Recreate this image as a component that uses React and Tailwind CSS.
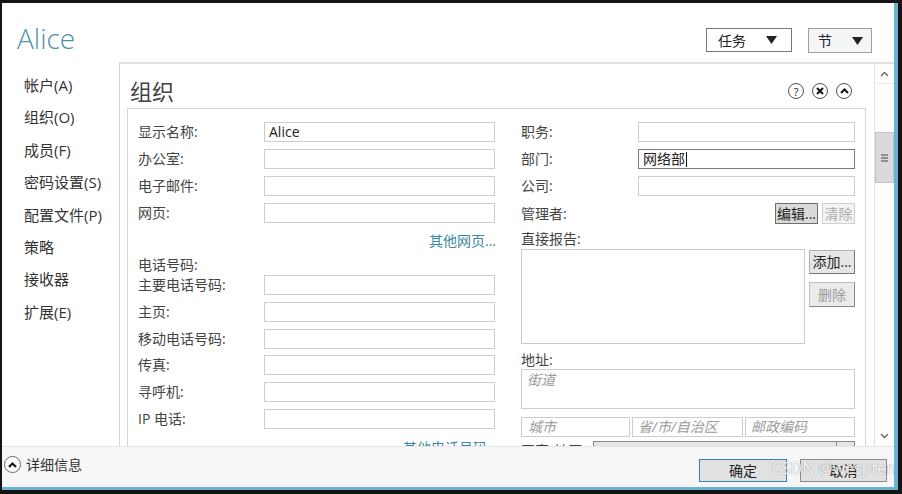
import React from "react";

const Tri = () => (
  <svg width="11" height="8" viewBox="0 0 11 8"><path d="M0 0 L11 0 L5.5 8 Z" fill="#222" /></svg>
);

const Field = ({ label, w = "w-[231px]", lw = "w-[126px]", value, focused }) => (
  <div className="flex items-center h-[20px]">
    <div className={`${lw} shrink-0 text-[14px] leading-[20px] text-[#444]`}>{label}</div>
    <div
      className={`${w} h-[20px] bg-white border ${focused ? "border-[#7a7a7a]" : "border-[#cdcdcd]"} text-[14px] leading-[18px] pl-[4px] text-[#222] flex items-center`}
    >
      {value}
      {focused && <span className="inline-block w-[1px] h-[15px] bg-[#111] ml-[1px]" />}
    </div>
  </div>
);

export default function App() {
  const nav = ["帐户(A)", "组织(O)", "成员(F)", "密码设置(S)", "配置文件(P)", "策略", "接收器", "扩展(E)"];
  return (
    <div className="w-[902px] h-[494px] bg-[#141414] pt-[3px] pl-[2px] pr-[4px] pb-[4px] font-['Open_Sans','Noto_Sans_CJK_SC',sans-serif] text-[#333]">
      <div className="w-full h-full bg-white border-r-[4px] border-b-[3px] border-[#6ab3d3] flex flex-col relative overflow-hidden">
        {/* header */}
        <div className="h-[59px] shrink-0 flex items-start">
          <div className="pl-[15px] pt-[21px] text-[28px] font-light leading-none text-[#4f93a6]">Alice</div>
          <div className="ml-auto flex gap-[16px] pt-[25px] pr-[22px]">
            <div className="w-[86px] h-[24px] border border-[#777] bg-white flex items-center pl-[11px] pr-[14px] text-[14px] text-[#222]">
              <span>任务</span>
              <span className="ml-auto"><Tri /></span>
            </div>
            <div className="w-[64px] h-[25px] border border-[#9c9c9c] bg-[#f3f5f7] flex items-center pl-[9px] pr-[8px] text-[14px] text-[#222]">
              <span>节</span>
              <span className="ml-auto"><Tri /></span>
            </div>
          </div>
        </div>

        {/* body */}
        <div className="flex flex-1 min-h-0">
          <div className="w-[118px] shrink-0 border-r border-[#d4d4d4] pt-[7px] pl-[22px]">
            {nav.map((n) => (
              <div key={n} className="text-[15px] leading-[32.4px] text-[#333]">{n}</div>
            ))}
          </div>
          <div className="flex-1 flex border-t-2 border-[#e1e1e1] min-w-0">
            {/* content */}
            <div className="flex-1 flex flex-col overflow-hidden">
              <div className="h-[44px] shrink-0 flex items-center pt-[10px] pl-[10px] pr-[22px]">
                <div className="text-[22px] leading-none text-[#444]">组织</div>
                <div className="ml-auto flex gap-[8px]">
                  <div className="w-[16px] h-[16px] rounded-full border border-[#555] flex items-center justify-center text-[11px] leading-none text-[#222]">?</div>
                  <div className="w-[16px] h-[16px] rounded-full border border-[#555] flex items-center justify-center">
                    <svg width="8" height="8" viewBox="0 0 8 8"><path d="M1 1 L7 7 M7 1 L1 7" stroke="#111" strokeWidth="2" /></svg>
                  </div>
                  <div className="w-[16px] h-[16px] rounded-full border border-[#555] flex items-center justify-center">
                    <svg width="9" height="6" viewBox="0 0 9 6"><path d="M1 5 L4.5 1.5 L8 5" stroke="#111" strokeWidth="2" fill="none" /></svg>
                  </div>
                </div>
              </div>
              <div className="ml-[7px] mr-[8px] flex-1 border-l border-t border-r border-[#d6d6d6] pl-[10px] pt-[13px] flex gap-[25px]">
                {/* left column */}
                <div className="w-[358px] shrink-0 flex flex-col">
                  <div className="flex flex-col gap-[7px]">
                    <Field label="显示名称:" value="Alice" />
                    <Field label="办公室:" />
                    <Field label="电子邮件:" />
                    <Field label="网页:" />
                  </div>
                  <div className="mt-[8px] h-[20px] text-right text-[14px] leading-[20px] text-[#3a87a3]">其他网页...</div>
                  <div className="mt-[4px] h-[20px] text-[14px] leading-[20px] text-[#444]">电话号码:</div>
                  <div className="flex flex-col gap-[6.8px]">
                    <Field label="主要电话号码:" />
                    <Field label="主页:" />
                    <Field label="移动电话号码:" />
                    <Field label="传真:" />
                    <Field label="寻呼机:" />
                    <Field label="IP 电话:" />
                  </div>
                  <div className="mt-[9px] h-[20px] text-right pr-[9px] text-[14px] leading-[20px] text-[#3a87a3]">其他电话号码</div>
                </div>
                {/* right column */}
                <div className="w-[334px] shrink-0 flex flex-col">
                  <div className="flex flex-col gap-[7px]">
                    <Field label="职务:" w="w-[217px]" lw="w-[117px]" />
                    <Field label="部门:" w="w-[217px]" lw="w-[117px]" value="网络部" focused />
                    <Field label="公司:" w="w-[217px]" lw="w-[117px]" />
                    <div className="flex items-center h-[21px]">
                      <div className="text-[14px] leading-[20px] text-[#444]">管理者:</div>
                      <div className="ml-auto flex gap-[4px]">
                        <div className="w-[43px] h-[21px] bg-[#dadada] border border-[#6e6e6e] text-[14px] leading-[19px] text-center text-[#222]">编辑...</div>
                        <div className="w-[33px] h-[21px] bg-[#f4f4f4] border border-[#cfcfcf] text-[14px] leading-[19px] text-center text-[#aaa]">清除</div>
                      </div>
                    </div>
                  </div>
                  <div className="mt-[5px] h-[20px] text-[14px] leading-[20px] text-[#444]">直接报告:</div>
                  <div className="flex gap-[4px]">
                    <div className="w-[284px] h-[95px] border border-[#c9c9c9] bg-white" />
                    <div className="flex flex-col gap-[8px] pt-[1px]">
                      <div className="w-[46px] h-[24px] bg-[#e6e6e6] border border-[#b0b0b0] border-r-[#777] border-b-[#777] text-[14px] leading-[22px] text-center text-[#222]">添加...</div>
                      <div className="w-[46px] h-[25px] bg-[#ebebeb] border border-[#bdbdbd] border-r-[#888] border-b-[#888] text-[14px] leading-[23px] text-center text-[#9a9a9a]">删除</div>
                    </div>
                  </div>
                  <div className="mt-[6px] h-[19px] text-[14px] leading-[20px] text-[#444]">地址:</div>
                  <div className="h-[40px] border border-[#cdcdcd] bg-white pl-[5px] text-[14px] leading-[20px] italic text-[#9a9a9a]">街道</div>
                  <div className="mt-[8px] flex gap-[2px]">
                    <div className="w-[109px] h-[20px] border border-[#cdcdcd] pl-[6px] text-[14px] leading-[18px] italic text-[#9a9a9a]">城市</div>
                    <div className="w-[111px] h-[20px] border border-[#cdcdcd] pl-[5px] text-[14px] leading-[18px] italic text-[#9a9a9a]">省/市/自治区</div>
                    <div className="w-[110px] h-[20px] border border-[#cdcdcd] pl-[5px] text-[14px] leading-[18px] italic text-[#9a9a9a]">邮政编码</div>
                  </div>
                  <div className="mt-[4px] flex items-start h-[20px]">
                    <div className="w-[72px] text-[14px] leading-[20px] text-[#444]">国家/地区:</div>
                    <div className="flex-1 h-[20px] border border-[#8a8a8a] bg-[#e6e6e6] flex">
                      <div className="flex-1" />
                      <div className="w-[18px] border-l border-[#8a8a8a]" />
                    </div>
                  </div>
                </div>
              </div>
            </div>
            {/* scrollbar */}
            <div className="w-[20px] shrink-0 border-l border-[#e0e0e0] bg-white flex flex-col">
              <div className="h-[20px] flex items-center justify-center border-b border-[#ececec]">
                <svg width="9" height="6" viewBox="0 0 9 6"><path d="M1 5 L4.5 1.5 L8 5" stroke="#666" strokeWidth="1.4" fill="none" /></svg>
              </div>
              <div className="flex-1 pt-[48px]">
                <div className="h-[51px] bg-[#dadada] border border-[#c4c4c4] flex items-center justify-center">
                  <svg width="7" height="8" viewBox="0 0 7 8"><path d="M0 1 H7 M0 4 H7 M0 7 H7" stroke="#777" strokeWidth="1.3" /></svg>
                </div>
              </div>
              <div className="h-[20px] flex items-center justify-center">
                <svg width="9" height="6" viewBox="0 0 9 6"><path d="M1 1 L4.5 4.5 L8 1" stroke="#666" strokeWidth="1.4" fill="none" /></svg>
              </div>
            </div>
          </div>
        </div>

        {/* footer */}
        <div className="h-[41px] shrink-0 bg-[#f6f6f6] border-t border-[#e6e6e6] flex items-start relative">
          <div className="flex items-center pl-[2px] pt-[9px]">
            <div className="w-[17px] h-[17px] rounded-full border border-[#666] bg-white flex items-center justify-center">
              <svg width="9" height="6" viewBox="0 0 9 6"><path d="M1 5 L4.5 1.5 L8 5" stroke="#111" strokeWidth="2" fill="none" /></svg>
            </div>
            <span className="ml-[5px] text-[14px] leading-none text-[#333]">详细信息</span>
          </div>
          <div className="ml-auto flex gap-[13px] pt-[12px] pr-[7px]">
            <div className="w-[88px] h-[23px] bg-[#e1e1e1] border border-[#3c7fb1] text-[14px] leading-[21px] text-center text-[#222]">确定</div>
            <div className="w-[87px] h-[23px] bg-[#e1e1e1] border border-[#8a8a8a] text-[14px] leading-[21px] text-center text-[#222]">取消</div>
          </div>
          <div className="absolute right-[-2px] top-[13px] text-[16px] leading-none text-white opacity-80 [text-shadow:0_0_1px_#888,0_0_1px_#888]">CSDN @wespten</div>
        </div>
      </div>
    </div>
  );
}
